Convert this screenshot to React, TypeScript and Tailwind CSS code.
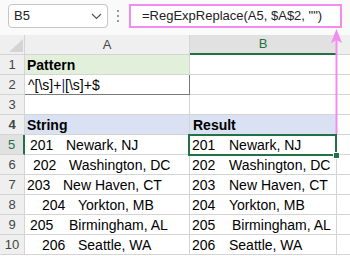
import React from "react";

type DataRow = { n: number; num: string; city: string; aNum: string; bNum: string };

const data: DataRow[] = [
  { n: 5, num: "201", city: "Newark, NJ", aNum: "ml-[5px] w-[36px]", bNum: "ml-[2px] w-[37px]" },
  { n: 6, num: "202", city: "Washington, DC", aNum: "ml-[8px] w-[36px]", bNum: "ml-[2px] w-[37px]" },
  { n: 7, num: "203", city: "New Haven, CT", aNum: "ml-[2px] w-[36px]", bNum: "ml-[2px] w-[37px]" },
  { n: 8, num: "204", city: "Yorkton, MB", aNum: "ml-[17px] w-[36px]", bNum: "ml-[2px] w-[37px]" },
  { n: 9, num: "205", city: "Birmingham, AL", aNum: "ml-[5px] w-[39px]", bNum: "ml-[2px] w-[40px]" },
  { n: 10, num: "206", city: "Seattle, WA", aNum: "ml-[17px] w-[36px]", bNum: "ml-[2px] w-[37px]" },
];

function RowHead({ n, selected }: { n: number; selected?: boolean }) {
  return (
    <div
      className={
        selected
          ? "w-[25px] h-[20px] shrink-0 bg-[#e1e1e1] border-b border-[#d4d4d4] border-r-2 border-r-[#217346] text-[#217346] text-[13px] leading-[20px] text-center"
          : "w-[25px] h-[20px] shrink-0 bg-[#efefef] border-b border-r border-[#d4d4d4] text-[#444] text-[13px] leading-[20px] text-center"
      }
    >
      {n}
    </div>
  );
}

export default function App() {
  return (
    <div
      className="relative w-[350px] h-[256px] overflow-hidden bg-white text-black"
      style={{ fontFamily: '"Liberation Sans", Arial, sans-serif' }}
    >
      {/* Toolbar */}
      <div className="h-[35px] flex items-start pt-[4px] bg-[#fafafa]">
        <div className="ml-[8px] w-[100px] h-[24px] rounded-[4px] border border-[#c6c6c6] bg-white flex items-center justify-between pl-[5px] pr-[5px]">
          <span className="text-[13px] text-[#222]">B5</span>
          <svg width="11" height="7" viewBox="0 0 11 7" className="mt-[1px]">
            <path d="M1 1 L5.5 5.5 L10 1" fill="none" stroke="#555" strokeWidth="1.2" />
          </svg>
        </div>
        <div className="ml-[9px] mt-[6px] flex flex-col gap-[3px]">
          <div className="w-[2px] h-[2px] bg-[#9a9a9a]" />
          <div className="w-[2px] h-[2px] bg-[#9a9a9a]" />
          <div className="w-[2px] h-[2px] bg-[#9a9a9a]" />
        </div>
        <div className="ml-[10px] w-[213px] h-[24px] border-2 border-[#f28cf0] bg-white flex items-center pl-[11px]">
          <span className="text-[13px] text-[#222] whitespace-pre">=RegExpReplace(A5, $A$2, "")</span>
        </div>
      </div>

      {/* Column headers */}
      <div className="flex h-[20px] text-[13px] leading-[19px]">
        <div className="relative w-[25px] shrink-0 bg-[#efefef] border-b border-r border-[#d4d4d4]">
          <svg width="25" height="19" viewBox="0 0 25 19" className="absolute left-0 top-0">
            <polygon points="9,17 23,4 23,17" fill="#d4d4d4" />
          </svg>
        </div>
        <div className="w-[165px] shrink-0 bg-[#efefef] border-b border-r border-[#d4d4d4] text-center text-[#444]">A</div>
        <div className="w-[147px] shrink-0 bg-[#e1e1e1] border-b-2 border-b-[#217346] border-r border-r-[#d4d4d4] text-center text-[#217346] leading-[18px]">B</div>
        <div className="flex-1 bg-[#efefef] border-b border-[#d4d4d4]" />
      </div>

      {/* Row 1 */}
      <div className="flex h-[20px] text-[14px] leading-[21px]">
        <RowHead n={1} />
        <div className="w-[165px] shrink-0 bg-[#e2efda] border-b border-r border-[#d4d4d4] pl-[2px] font-bold overflow-hidden">Pattern</div>
        <div className="w-[147px] shrink-0 border-b border-r border-[#d4d4d4]" />
        <div className="flex-1 border-b border-[#d4d4d4]" />
      </div>
      {/* Row 2 */}
      <div className="flex h-[20px] text-[14px] leading-[21px]">
        <RowHead n={2} />
        <div className="w-[165px] shrink-0 border-b border-r border-[#7a7a7a] pl-[3px] whitespace-pre overflow-hidden">
          ^[\s]+<span className="text-[#2b2b8a]">|</span>[\s]+$
        </div>
        <div className="w-[147px] shrink-0 border-b border-r border-[#d4d4d4]" />
        <div className="flex-1 border-b border-[#d4d4d4]" />
      </div>
      {/* Row 3 */}
      <div className="flex h-[20px] text-[14px] leading-[21px]">
        <RowHead n={3} />
        <div className="w-[165px] shrink-0 border-b border-r border-[#d4d4d4]" />
        <div className="w-[147px] shrink-0 border-b border-r border-[#d4d4d4]" />
        <div className="flex-1 border-b border-[#d4d4d4]" />
      </div>
      {/* Row 4 */}
      <div className="flex h-[20px] text-[14px] leading-[21px] font-bold">
        <RowHead n={4} />
        <div className="w-[165px] shrink-0 bg-[#d9e1f2] border-b border-r border-[#d4d4d4] pl-[2px]">String</div>
        <div className="w-[147px] shrink-0 bg-[#d9e1f2] border-b border-r border-[#d4d4d4] pl-[3px]">Result</div>
        <div className="flex-1 border-b border-[#d4d4d4]" />
      </div>
      {/* Data rows */}
      {data.map((r) => (
        <div key={r.n} className="flex h-[20px] text-[14px] leading-[21px]">
          <RowHead n={r.n} selected={r.n === 5} />
          <div className="w-[165px] shrink-0 border-b border-r border-[#d4d4d4] flex whitespace-pre overflow-hidden">
            <span className={r.aNum}>{r.num}</span>
            <span>{r.city}</span>
          </div>
          <div className="w-[147px] shrink-0 border-b border-r border-[#d4d4d4] flex whitespace-pre overflow-hidden">
            <span className={r.bNum}>{r.num}</span>
            <span>{r.city}</span>
          </div>
          <div className="flex-1 border-b border-[#d4d4d4]" />
        </div>
      ))}

      {/* Selection of B5 */}
      <div className="absolute left-[188px] top-[134px] w-[149px] h-[22px] border-2 border-[#217346]" />
      <div className="absolute left-[333px] top-[152px] w-[7px] h-[7px] bg-[#217346] border border-white" />

      {/* Pink arrow */}
      <svg className="absolute left-[326px] top-[28px]" width="20" height="108" viewBox="0 0 20 108">
        <line x1="10.5" y1="6" x2="10.5" y2="106" stroke="#f28cf0" strokeWidth="2" />
        <polygon points="10.5,1 5,15 10.5,12 16,15" fill="#f28cf0" />
      </svg>
    </div>
  );
}
